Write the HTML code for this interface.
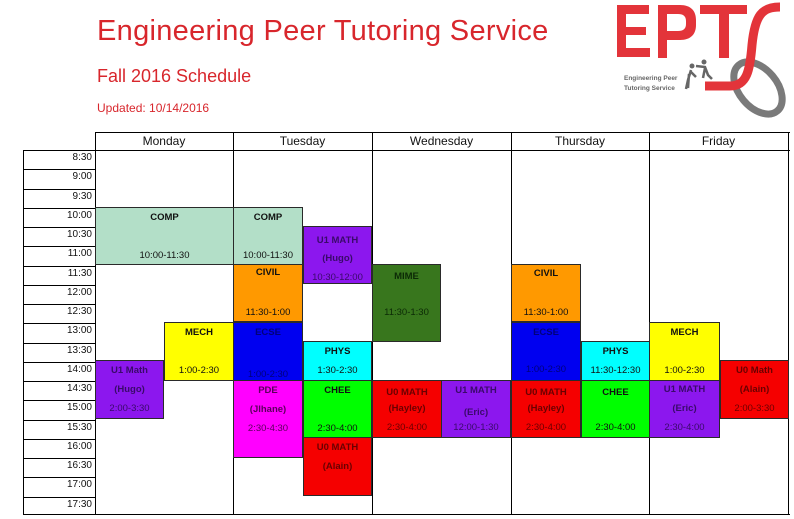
<!DOCTYPE html>
<html><head><meta charset="utf-8"><style>
*{margin:0;padding:0;box-sizing:border-box}
body{width:794px;height:519px;background:#fff;position:relative;overflow:hidden;font-family:"Liberation Sans",sans-serif}
.a{position:absolute}
.h1{left:97px;top:15px;font-size:29px;color:#d8262c;white-space:nowrap;letter-spacing:0.3px}
.h2{left:97px;top:66px;font-size:18px;color:#d8262c}
.h3{left:97px;top:101px;font-size:12px;color:#d8262c}
.t{left:23px;width:73px;height:19.25px;border-left:1px solid #000;border-top:1px solid #000;font-size:10px;text-align:right;padding-right:4px;padding-top:1px;line-height:12px;color:#111}
.vl{top:132px;width:1px;height:383px;background:#000}
.day{top:133px;height:17px;font-size:12px;text-align:center;line-height:17px;color:#111}
.b{border:1px solid #2a2a2a;text-align:center;font-size:9.5px;color:#111}
.b span{position:absolute;left:0;right:0;line-height:19px;white-space:nowrap}
.b .x{font-weight:bold}
.l0{top:0}.l1{top:19px}.l2{top:38px}
.pu{background:#8c17ee}
.pu span{color:#3a0a6a}
.bl{background:#0000f0}.bl span{color:#00007a}
.re{background:#f50000}.re span{color:#6a0000}
.mi{background:#b3dfc8}.or{background:#ff9900}.ye{background:#ffff00}.cy{background:#00ffff}
.gr{background:#00ff00}.mg{background:#ff00ff}.dg{background:#38761d}
.mg span{color:#5a005a}.dg span{color:#0c2a06}
</style></head><body>
<div class="a h1">Engineering Peer Tutoring Service</div>
<div class="a h2">Fall 2016 Schedule</div>
<div class="a h3">Updated: 10/14/2016</div>

<!-- logo -->
<svg class="a" style="left:612px;top:0" width="182" height="125" viewBox="0 0 182 125">
<ellipse cx="146" cy="88" rx="19" ry="30" transform="rotate(-40 146 88)" fill="none" stroke="#7a7a7a" stroke-width="7"/>
<path d="M5 5h32v9h-23v13h20v8h-20v13h24v9h-33z" fill="#e3343a"/>
<path d="M46 58v-53h22c11 0 16 6 16 15v5c0 9-5 15-16 15h-13v18z M55 14v17h11c5 0 8-2 8-7v-3c0-5-3-7-8-7z" fill="#e3343a"/>
<path d="M88 5h47v9h-18v44h-10v-44h-19z" fill="#e3343a"/>
<path d="M93 86H118C135 86 138 70 140 45C143 15 150 7 168 7" fill="none" stroke="#e3343a" stroke-width="9"/>
<text x="12" y="80" font-family="Liberation Sans" font-size="6.5" font-weight="bold" fill="#666">Engineering Peer</text>
<text x="12" y="90" font-family="Liberation Sans" font-size="6.5" font-weight="bold" fill="#666">Tutoring Service</text>
<circle cx="80" cy="66" r="2.5" fill="#666"/><path d="M79 70l-3 10l-2 9M79 72l5 5M77 74l-1 14" stroke="#666" stroke-width="2.5" fill="none"/>
<circle cx="92" cy="62" r="2.5" fill="#666"/><path d="M84 66l9 1l3 8l4 4M93 68l-2 10" stroke="#666" stroke-width="2.5" fill="none"/>
</svg>

<!-- header -->
<div class="a" style="left:95px;top:132px;width:695px;height:1px;background:#000"></div>
<div class="a" style="left:95px;top:150px;width:695px;height:1px;background:#000"></div>
<div class="a" style="left:23px;top:514px;width:767px;height:1px;background:#000"></div>
<div class="a vl" style="left:95px"></div>
<div class="a vl" style="left:233px"></div>
<div class="a vl" style="left:372px"></div>
<div class="a vl" style="left:511px"></div>
<div class="a vl" style="left:649px"></div>
<div class="a vl" style="left:788px"></div>
<div class="a day" style="left:95px;width:138px">Monday</div>
<div class="a day" style="left:233px;width:139px">Tuesday</div>
<div class="a day" style="left:372px;width:139px">Wednesday</div>
<div class="a day" style="left:511px;width:138px">Thursday</div>
<div class="a day" style="left:649px;width:139px">Friday</div>

<!-- times -->
<div class="a t" style="top:150px">8:30</div>
<div class="a t" style="top:169.25px">9:00</div>
<div class="a t" style="top:188.5px">9:30</div>
<div class="a t" style="top:207.75px">10:00</div>
<div class="a t" style="top:227px">10:30</div>
<div class="a t" style="top:246.25px">11:00</div>
<div class="a t" style="top:265.5px">11:30</div>
<div class="a t" style="top:284.75px">12:00</div>
<div class="a t" style="top:304px">12:30</div>
<div class="a t" style="top:323.25px">13:00</div>
<div class="a t" style="top:342.5px">13:30</div>
<div class="a t" style="top:361.75px">14:00</div>
<div class="a t" style="top:381px">14:30</div>
<div class="a t" style="top:400.25px">15:00</div>
<div class="a t" style="top:419.5px">15:30</div>
<div class="a t" style="top:438.75px">16:00</div>
<div class="a t" style="top:458px">16:30</div>
<div class="a t" style="top:477.25px">17:00</div>
<div class="a t" style="top:496.5px;height:18px">17:30</div>

<!-- Monday -->
<div class="a b mi" style="left:95px;top:207px;width:139px;height:58px"><span class="x l0">COMP</span><span class="l2">10:00-11:30</span></div>
<div class="a b ye" style="left:164px;top:322px;width:70px;height:59px"><span class="x l0">MECH</span><span class="l2">1:00-2:30</span></div>
<div class="a b pu" style="left:95px;top:360px;width:69px;height:59px"><span class="x l0">U1 Math</span><span class="x l1">(Hugo)</span><span class="l2">2:00-3:30</span></div>

<!-- Tuesday -->
<div class="a b mi" style="left:233px;top:207px;width:70px;height:58px"><span class="x l0">COMP</span><span class="l2">10:00-11:30</span></div>
<div class="a b pu" style="left:303px;top:226px;width:69px;height:58px"><span class="x" style="top:4px">U1 MATH</span><span class="x" style="top:22px">(Hugo)</span><span style="top:41px">10:30-12:00</span></div>
<div class="a b or" style="left:233px;top:264px;width:70px;height:58px"><span class="x" style="top:-2px">CIVIL</span><span style="top:38px">11:30-1:00</span></div>
<div class="a b bl" style="left:233px;top:322px;width:70px;height:59px"><span class="x l0">ECSE</span><span style="top:42px">1:00-2:30</span></div>
<div class="a b cy" style="left:303px;top:341px;width:69px;height:40px"><span class="x l0">PHYS</span><span class="l1">1:30-2:30</span></div>
<div class="a b mg" style="left:233px;top:380px;width:70px;height:78px"><span class="x l0">PDE</span><span class="x l1">(Jlhane)</span><span class="l2">2:30-4:30</span></div>
<div class="a b gr" style="left:303px;top:380px;width:69px;height:58px"><span class="x l0">CHEE</span><span class="l2">2:30-4:00</span></div>
<div class="a b re" style="left:303px;top:437px;width:69px;height:59px"><span class="x l0">U0 MATH</span><span class="x l1">(Alain)</span></div>

<!-- Wednesday -->
<div class="a b dg" style="left:372px;top:264px;width:69px;height:78px"><span class="x" style="top:2px">MIME</span><span style="top:38px">11:30-1:30</span></div>
<div class="a b re" style="left:372px;top:380px;width:70px;height:58px"><span class="x" style="top:2px">U0 MATH</span><span class="x" style="top:18px">(Hayley)</span><span style="top:37px">2:30-4:00</span></div>
<div class="a b pu" style="left:441px;top:380px;width:70px;height:58px"><span class="x" style="top:0">U1 MATH</span><span class="x" style="top:22px">(Eric)</span><span style="top:37px">12:00-1:30</span></div>

<!-- Thursday -->
<div class="a b or" style="left:511px;top:264px;width:70px;height:58px"><span class="x" style="top:-1px">CIVIL</span><span style="top:38px">11:30-1:00</span></div>
<div class="a b bl" style="left:511px;top:322px;width:70px;height:59px"><span class="x l0">ECSE</span><span style="top:37px">1:00-2:30</span></div>
<div class="a b cy" style="left:581px;top:341px;width:69px;height:40px"><span class="x l0">PHYS</span><span class="l1">11:30-12:30</span></div>
<div class="a b re" style="left:511px;top:380px;width:70px;height:58px"><span class="x" style="top:2px">U0 MATH</span><span class="x" style="top:18px">(Hayley)</span><span style="top:37px">2:30-4:00</span></div>
<div class="a b gr" style="left:581px;top:380px;width:69px;height:58px"><span class="x" style="top:2px">CHEE</span><span style="top:37px">2:30-4:00</span></div>

<!-- Friday -->
<div class="a b ye" style="left:649px;top:322px;width:71px;height:59px"><span class="x l0">MECH</span><span class="l2">1:00-2:30</span></div>
<div class="a b pu" style="left:649px;top:380px;width:71px;height:58px"><span class="x" style="top:-1px">U1 MATH</span><span class="x" style="top:18px">(Eric)</span><span style="top:37px">2:30-4:00</span></div>
<div class="a b re" style="left:720px;top:360px;width:69px;height:59px"><span class="x l0">U0 Math</span><span class="x l1">(Alain)</span><span class="l2">2:00-3:30</span></div>
</body></html>
